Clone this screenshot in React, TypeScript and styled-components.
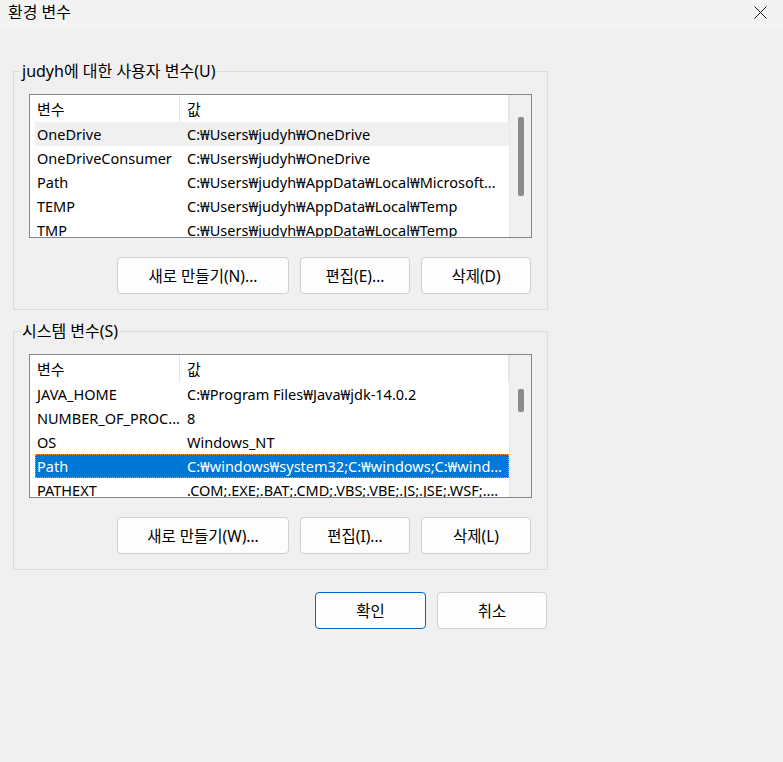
import React from 'react';
import styled, { createGlobalStyle } from 'styled-components';

const GlobalStyle = createGlobalStyle`
    html, body {
        margin: 0;
        padding: 0;
        background: #f0f0f0;
    }
    body {
        font-family: 'Noto Sans', 'Noto Sans CJK KR', sans-serif;
        font-size: 14.5px;
        color: #000;
    }
`;

const Window = styled.div`
    width: 783px;
    min-height: 762px;
    background: #f0f0f0;
`;

const TitleBar = styled.div`
    height: 30px;
    background: #f3f3f3;
    display: flex;
    align-items: center;
    justify-content: space-between;
    padding-left: 8px;
    box-sizing: border-box;
`;

const Title = styled.div`
    font-size: 16px;
    line-height: 20px;
    margin-top: -6px;
`;

const CloseButton = styled.div`
    width: 46px;
    height: 30px;
    display: flex;
    align-items: center;
    justify-content: center;
    margin-top: -6px;
`;

const Content = styled.div`
    padding: 31px 0 0 13px;
`;

const Group = styled.fieldset<{ $gap?: number }>`
    width: 535px;
    box-sizing: border-box;
    margin: ${(p) => p.$gap || 0}px 0 0 0;
    padding: 13px 15px 15px 15px;
    border: 1px solid #dcdcdc;
    min-width: 0;
`;

const Legend = styled.legend`
    padding: 0 2px;
    margin-left: -9px;
    font-size: 16px;
    line-height: 20px;
`;

const List = styled.div`
    width: 503px;
    height: 144px;
    box-sizing: border-box;
    border: 1px solid #828790;
    background: #fff;
    display: flex;
    overflow: hidden;
`;

const Table = styled.div`
    flex: 1;
    overflow: hidden;
    display: flex;
    flex-direction: column;
`;

const Header = styled.div`
    height: 27px;
    flex-shrink: 0;
    display: grid;
    grid-template-columns: 150px 1fr;
    align-items: stretch;
`;

const HeaderCell = styled.div`
    display: flex;
    align-items: center;
    padding-left: 7px;
    border-right: 1px solid #e5e5e5;
    white-space: nowrap;
    font-size: 15px;
`;

const Row = styled.div<{ $state?: 'hover' | 'selected' }>`
    height: 24px;
    flex-shrink: 0;
    margin-left: 5px;
    box-sizing: border-box;
    display: grid;
    grid-template-columns: 146px 1fr;
    align-items: center;
    white-space: nowrap;
    background: ${(p) =>
        p.$state === 'selected' ? '#0078d7' : p.$state === 'hover' ? '#f0f0f0' : 'transparent'};
    color: ${(p) => (p.$state === 'selected' ? '#fff' : '#000')};
    outline: ${(p) => (p.$state === 'selected' ? '1px dotted #ff9a3c' : 'none')};
    outline-offset: -1px;
`;

const NameCell = styled.div`
    padding-left: 2px;
    overflow: hidden;
`;

const ValueCell = styled.div`
    padding-left: 6px;
    overflow: hidden;
`;

const ScrollBar = styled.div`
    width: 21px;
    flex-shrink: 0;
    background: #f0f0f0;
    border-left: 1px solid #e8e8e8;
    display: flex;
    flex-direction: column;
    align-items: center;
`;

const Thumb = styled.div<{ $top: number; $height: number }>`
    width: 6px;
    margin-left: 1px;
    border-radius: 2px;
    background: #8a8a8a;
    margin-top: ${(p) => p.$top}px;
    height: ${(p) => p.$height}px;
`;

const ButtonRow = styled.div<{ $top: number }>`
    display: flex;
    justify-content: flex-end;
    gap: 11px;
    margin-top: ${(p) => p.$top}px;
    padding-right: 1px;
`;

const Button = styled.button<{ $width: number; $primary?: boolean }>`
    width: ${(p) => p.$width}px;
    height: 37px;
    box-sizing: border-box;
    background: #fdfdfd;
    border: 1px solid ${(p) => (p.$primary ? '#0067c0' : '#d0d0d0')};
    border-radius: 4px;
    font-family: inherit;
    font-size: 15.5px;
    color: #000;
    padding: 0;
`;

const Footer = styled.div`
    width: 534px;
    display: flex;
    justify-content: flex-end;
    gap: 11px;
    margin-top: 22px;
`;

type Variable = { name: string; value: string; state?: 'hover' | 'selected' };

const userVars: Variable[] = [
    { name: 'OneDrive', value: 'C:₩Users₩judyh₩OneDrive', state: 'hover' },
    { name: 'OneDriveConsumer', value: 'C:₩Users₩judyh₩OneDrive' },
    { name: 'Path', value: 'C:₩Users₩judyh₩AppData₩Local₩Microsoft...' },
    { name: 'TEMP', value: 'C:₩Users₩judyh₩AppData₩Local₩Temp' },
    { name: 'TMP', value: 'C:₩Users₩judyh₩AppData₩Local₩Temp' },
];

const systemVars: Variable[] = [
    { name: 'JAVA_HOME', value: 'C:₩Program Files₩Java₩jdk-14.0.2' },
    { name: 'NUMBER_OF_PROC...', value: '8' },
    { name: 'OS', value: 'Windows_NT' },
    { name: 'Path', value: 'C:₩windows₩system32;C:₩windows;C:₩wind...', state: 'selected' },
    { name: 'PATHEXT', value: '.COM;.EXE;.BAT;.CMD;.VBS;.VBE;.JS;.JSE;.WSF;....' },
];

const VarList = ({ rows, thumbTop, thumbHeight }: { rows: Variable[]; thumbTop: number; thumbHeight: number }) => (
    <List>
        <Table>
            <Header>
                <HeaderCell>변수</HeaderCell>
                <HeaderCell>값</HeaderCell>
            </Header>
            {rows.map((r) => (
                <Row key={r.name} $state={r.state}>
                    <NameCell>{r.name}</NameCell>
                    <ValueCell>{r.value}</ValueCell>
                </Row>
            ))}
        </Table>
        <ScrollBar>
            <Thumb $top={thumbTop} $height={thumbHeight} />
        </ScrollBar>
    </List>
);

export default function App() {
    return (
        <Window>
            <GlobalStyle />
            <TitleBar>
                <Title>환경 변수</Title>
                <CloseButton>
                    <svg width="13" height="13" viewBox="0 0 13 13">
                        <path d="M0.5 0.5 L12.5 12.5 M12.5 0.5 L0.5 12.5" stroke="#1a1a1a" strokeWidth="1" />
                    </svg>
                </CloseButton>
            </TitleBar>
            <Content>
                <Group>
                    <Legend>judyh에 대한 사용자 변수(U)</Legend>
                    <VarList rows={userVars} thumbTop={22} thumbHeight={79} />
                    <ButtonRow $top={19}>
                        <Button $width={172}>새로 만들기(N)...</Button>
                        <Button $width={110}>편집(E)...</Button>
                        <Button $width={110}>삭제(D)</Button>
                    </ButtonRow>
                </Group>
                <Group $gap={11}>
                    <Legend>시스템 변수(S)</Legend>
                    <VarList rows={systemVars} thumbTop={34} thumbHeight={23} />
                    <ButtonRow $top={19}>
                        <Button $width={172}>새로 만들기(W)...</Button>
                        <Button $width={110}>편집(I)...</Button>
                        <Button $width={110}>삭제(L)</Button>
                    </ButtonRow>
                </Group>
                <Footer>
                    <Button $width={111} $primary>확인</Button>
                    <Button $width={110}>취소</Button>
                </Footer>
            </Content>
        </Window>
    );
}
